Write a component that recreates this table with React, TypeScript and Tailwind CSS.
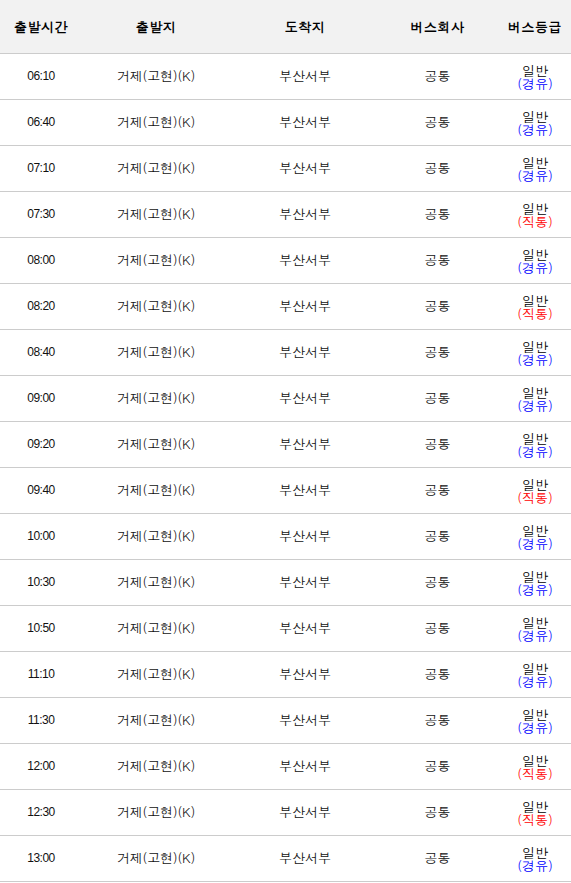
const rows: [string, "경유" | "직통"][] = [
  ["06:10", "경유"],
  ["06:40", "경유"],
  ["07:10", "경유"],
  ["07:30", "직통"],
  ["08:00", "경유"],
  ["08:20", "직통"],
  ["08:40", "경유"],
  ["09:00", "경유"],
  ["09:20", "경유"],
  ["09:40", "직통"],
  ["10:00", "경유"],
  ["10:30", "경유"],
  ["10:50", "경유"],
  ["11:10", "경유"],
  ["11:30", "경유"],
  ["12:00", "직통"],
  ["12:30", "직통"],
  ["13:00", "경유"],
];

export default function App() {
  return (
    <div className="w-[571px] overflow-hidden bg-white font-['Dotum','Noto_Sans_CJK_KR',sans-serif] text-[#111]">
      <table className="w-[575px] table-fixed border-collapse text-center">
        <colgroup>
          <col className="w-[82px]" />
          <col className="w-[148px]" />
          <col className="w-[150px]" />
          <col className="w-[115px]" />
          <col className="w-[80px]" />
        </colgroup>
        <thead>
          <tr className="h-[53px] bg-[#f2f2f2] border-b border-[#cccccc] text-[13px] font-bold text-black">
            <th className="font-bold tracking-[0.5px]">출발시간</th>
            <th className="font-bold tracking-[0.5px]">출발지</th>
            <th className="font-bold tracking-[0.5px]">도착지</th>
            <th className="font-bold tracking-[0.5px]">버스회사</th>
            <th className="font-bold tracking-[0.5px]">버스등급</th>
          </tr>
        </thead>
        <tbody>
          {rows.map(([time, kind]) => (
            <tr key={time} className="h-[46px] border-b border-[#cccccc] text-[13px]">
              <td className="font-['Liberation_Sans',sans-serif] text-[12px] tracking-[-0.5px]">{time}</td>
              <td className="tracking-[-0.2px]">거제(고현)(K)</td>
              <td>부산서부</td>
              <td>공통</td>
              <td className="pt-[2px] leading-[13px]">
                <div className="text-black">일반</div>
                <div className={kind === "경유" ? "text-[#0000ff]" : "text-[#ff0000]"}>({kind})</div>
              </td>
            </tr>
          ))}
        </tbody>
      </table>
    </div>
  );
}
